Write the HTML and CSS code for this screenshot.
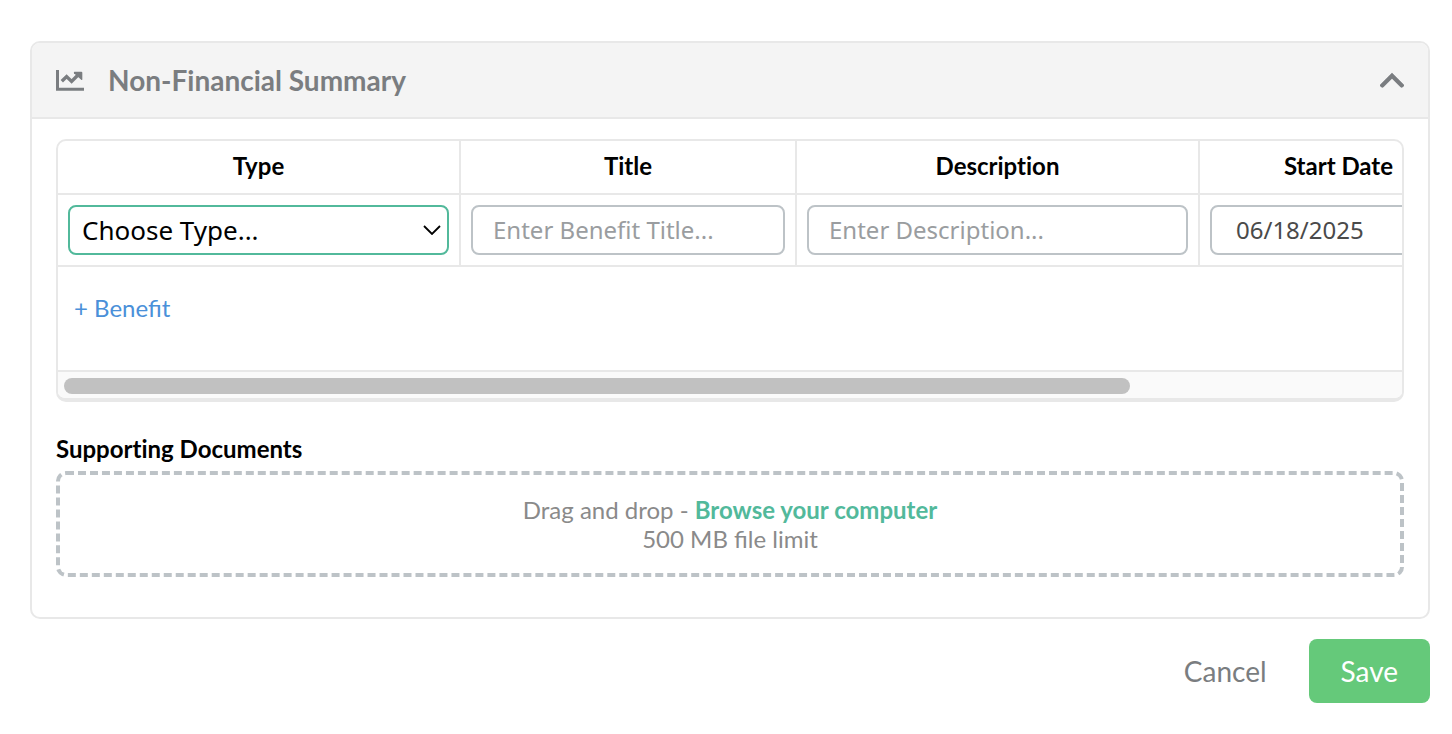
FILE: index.html
```html
<!DOCTYPE html>
<html lang="en">
<head>
  <meta charset="UTF-8" />
  <meta name="viewport" content="width=device-width, initial-scale=1.0"/>
  <title>Non-Financial Summary</title>

  <link rel="stylesheet" href="styles.css">
</head>
<body>
  <form class="summary-form">
    <section class="card">
      <header class="card-header">
        <svg class="chart-icon" viewBox="0 0 28 22" aria-hidden="true">
          <path d="M1.5 1V20.3H28" stroke-width="3" />
          <path d="M5.8 12.3L10.6 7.6L15.6 12.4L23 5" stroke-width="3.4" />
          <path class="arrow-head" d="M18.6 2.8H25.4Q26.3 2.8 26.3 3.7V10.2Q26.3 11.6 25.2 10.8L18 4.2Q17.4 2.8 18.6 2.8Z" />
        </svg>
        <h2>Non-Financial Summary</h2>
        <button type="button" class="collapse-button" aria-label="Collapse">
          <svg class="chevron-icon" viewBox="0 0 24 16" aria-hidden="true">
            <path d="M2.2 13.4L12 3.8L21.8 13.4" stroke-width="4.2" stroke-linecap="round" />
          </svg>
        </button>
      </header>

      <div class="card-body">
        <div class="table-box">
          <div class="table-scroll">
            <table class="benefits">
              <colgroup>
                <col class="col-wide">
                <col class="col-title">
                <col class="col-wide">
                <col class="col-date">
                <col class="col-date">
              </colgroup>
              <thead>
                <tr>
                  <th>Type</th>
                  <th>Title</th>
                  <th>Description</th>
                  <th>Start Date</th>
                  <td></td>
                </tr>
              </thead>
              <tbody>
                <tr>
                  <td>
                    <div class="select-wrap">
                      <select class="field type-select" aria-label="Type">
                        <option>Choose Type...</option>
                      </select>
                      <svg class="select-arrow" viewBox="0 0 18 10" aria-hidden="true">
                        <path d="M1 1L9 9L17 1" stroke-width="1.8" />
                      </svg>
                    </div>
                  </td>
                  <td><input class="field" type="text" aria-label="Title" placeholder="Enter Benefit Title..."></td>
                  <td><input class="field" type="text" aria-label="Description" placeholder="Enter Description..."></td>
                  <td><input class="field date-field" type="text" aria-label="Start Date" value="06/18/2025"></td>
                  <td></td>
                </tr>
              </tbody>
            </table>
            <div class="table-footer">
              <button type="button" class="add-button">+ Benefit</button>
            </div>
          </div>
          <div class="scroll-track">
            <div class="scroll-thumb"></div>
          </div>
        </div>

        <h3>Supporting Documents</h3>
        <div class="dropzone">
          <p>Drag and drop - <a href="#">Browse your computer</a></p>
          <p>500 MB file limit</p>
        </div>
      </div>
    </section>

    <div class="actions">
      <button type="button" class="cancel-button">Cancel</button>
      <button type="submit" class="save-button">Save</button>
    </div>
  </form>
</body>
</html>
```
FILE: styles.css
```css
* {
  box-sizing: border-box;
  margin: 0;
  padding: 0;
}

body {
  background-color: #fff;
  color: #000;
  font-family: Lato, sans-serif;
  font-size: 24px;
  line-height: 29px;
}

h2,
h3,
th {
  font-variant-ligatures: none;
}

button {
  border: none;
  background: none;
  font: inherit;
  cursor: pointer;
}

svg {
  display: block;
  fill: none;
  stroke: #7a7d80;
}

.summary-form {
  padding: 41px 22px 30px 30px;
}

.card {
  border: 2px solid #e8e8e8;
  border-radius: 10px;
  overflow: hidden;
}

.card-header {
  display: flex;
  align-items: center;
  gap: 24px;
  height: 76px;
  padding: 0 24px;
  background-color: #f4f4f4;
  border-bottom: 2px solid #e8e8e8;
}

.card-header h2 {
  flex: 1;
  color: #7a7d80;
  font-size: 28px;
  line-height: 34px;
}

.chart-icon {
  width: 28px;
  height: 22px;
}

.chart-icon .arrow-head {
  fill: #7a7d80;
  stroke: none;
}

.chevron-icon {
  width: 24px;
  height: 16px;
}

.card-body {
  padding: 20px 24px 40px;
}

/* benefits table */
.table-box {
  border: 2px solid #e8e8e8;
  border-bottom-width: 4px;
  border-radius: 10px;
  overflow: hidden;
}

.table-scroll {
  overflow-x: auto;
  scrollbar-width: none;
}

.benefits {
  width: 1700px;
  table-layout: fixed;
  border-collapse: separate;
  border-spacing: 0;
}

.col-wide {
  width: 403px;
}

.col-title {
  width: 336px;
}

.col-date {
  width: 279px;
}

.benefits th,
.benefits td {
  padding: 10px;
  border-right: 2px solid #e8e8e8;
  border-bottom: 2px solid #e8e8e8;
}

.benefits th {
  padding-bottom: 13px;
}

.field {
  display: block;
  width: 100%;
  height: 50px;
  padding: 0 20px 2px;
  border: 2px solid #bdc3c7;
  border-radius: 8px;
  background-color: #fff;
  color: #4a4a4a;
  font-family: "Noto Sans", sans-serif;
  font-size: 24px;
}

.field::placeholder {
  color: #9a9da0;
}

.date-field {
  padding-left: 24px;
}

.select-wrap {
  position: relative;
}

.type-select {
  padding: 0 12px;
  border-color: #52b99b;
  color: #000;
  font-size: 26px;
  appearance: none;
}

.select-arrow {
  position: absolute;
  top: 20px;
  right: 8px;
  width: 18px;
  height: 10px;
  stroke: #000;
  pointer-events: none;
}

.table-footer {
  height: 103px;
  padding: 26px 16px;
}

.add-button {
  color: #4a90d9;
}

.scroll-track {
  padding: 6px;
  height: 28px;
  border-top: 2px solid #e8e8e8;
  background-color: #fafafa;
}

.scroll-thumb {
  width: 80%;
  height: 16px;
  border-radius: 8px;
  background-color: #c1c1c1;
}

/* documents */
.card-body h3 {
  margin: 32px 0 8px;
  font-size: 24px;
}

.dropzone {
  padding: 20px;
  border: 4px dashed #bdc3c7;
  border-radius: 10px;
  color: #8a8a8a;
  text-align: center;
}

.dropzone a {
  color: #52b99b;
  font-weight: bold;
  text-decoration: none;
}

.actions {
  display: flex;
  justify-content: flex-end;
  gap: 10px;
  margin-top: 20px;
}

.actions button {
  height: 64px;
  padding: 0 32px;
  border-radius: 8px;
  font-size: 28px;
}

.cancel-button {
  color: #7a7d80;
}

.save-button {
  background-color: #65c97a;
  color: #fff;
}
```
